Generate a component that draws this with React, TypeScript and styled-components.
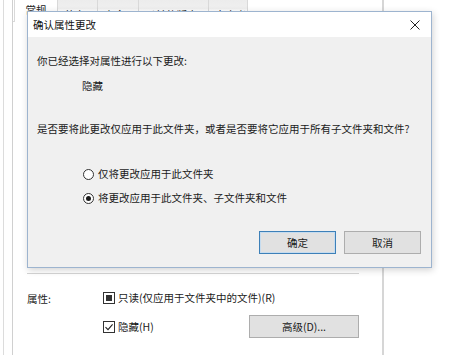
import React from "react";
import styled, { createGlobalStyle } from "styled-components";

const Global = createGlobalStyle`
  html, body { margin: 0; padding: 0; background: #ffffff; }
  body {
    font-family: "Noto Sans CJK SC", "Noto Sans", "Liberation Sans", sans-serif;
    font-size: 10.5px;
    color: #1a1a1a;
  }
`;

const Page = styled.div`
  position: relative;
  width: 449px;
  height: 355px;
  overflow: hidden;
  background: #ffffff;
`;

const OuterFrame = styled.div`
  margin-left: 3px;
  width: 381px;
  height: 355px;
  border-left: 1px solid #dcdcdc;
  padding-left: 8px;
  box-sizing: border-box;
`;

const Window = styled.div`
  height: 100%;
  border-left: 1px solid #d0d0d0;
  border-right: 2px solid #d6d6d6;
  display: flex;
  flex-direction: column;
  background: #ffffff;
`;

const TabStrip = styled.div`
  display: flex;
  height: 22px;
  border-bottom: 1px solid #d9d9d9;
  box-sizing: border-box;
  padding-left: 1px;
`;

const Tab = styled.div<{ $active?: boolean; $w: number }>`
  width: ${(p) => p.$w}px;
  height: ${(p) => (p.$active ? 22 : 21)}px;
  box-sizing: border-box;
  border: 1px solid #d9d9d9;
  border-top: none;
  border-left: ${(p) => (p.$active ? "1px solid #d9d9d9" : "none")};
  border-bottom: ${(p) => (p.$active ? "none" : "1px solid #d9d9d9")};
  background: ${(p) => (p.$active ? "#ffffff" : "linear-gradient(#ececec, #f0f0f0 45%, #ffffff 50%)")};
  display: flex;
  align-items: flex-start;
  justify-content: ${(p) => (p.$active ? "center" : "flex-start")};
  padding-left: ${(p) => (p.$active ? 0 : 6)}px;
  padding-top: ${(p) => (p.$active ? 3 : 8)}px;
  overflow: hidden;
  font-size: 10.5px;
  line-height: 14px;
  color: #222;
`;

const Panel = styled.div`
  flex: 1;
  display: flex;
  flex-direction: column;
  padding: 0 23px 0 14px;
`;

const CoveredArea = styled.div`
  height: 251px;
`;

const Separator = styled.div`
  height: 0;
  border-top: 1px solid #d4d4d4;
  border-bottom: 1px solid #ffffff;
`;

const AttrGrid = styled.div`
  display: grid;
  grid-template-columns: 76px 1fr;
  margin-top: 16px;
`;

const AttrLabel = styled.div`
  line-height: 14px;
  margin-top: 1px;
  color: #222;
`;

const AttrRows = styled.div`
  display: flex;
  flex-direction: column;
  gap: 10px;
`;

const CheckRow = styled.div`
  display: flex;
  align-items: center;
  justify-content: space-between;
  line-height: 14px;
`;

const CheckLabel = styled.label`
  display: flex;
  align-items: center;
  gap: 3px;
  color: #1a1a1a;
`;

const CheckBox = styled.span`
  width: 12px;
  height: 12px;
  box-sizing: border-box;
  border: 1px solid #333;
  background: #fff;
  display: flex;
  align-items: center;
  justify-content: center;
`;

const Indeterminate = styled.span`
  width: 6px;
  height: 6px;
  background: #333;
`;

const WinButton = styled.button<{ $default?: boolean; $w: number }>`
  width: ${(p) => p.$w}px;
  height: 23px;
  box-sizing: border-box;
  border: 1px solid ${(p) => (p.$default ? "#3d80b8" : "#adadad")};
  box-shadow: ${(p) => (p.$default ? "inset 0 0 0 1px #c6dcef" : "none")};
  background: #e1e1e1;
  font-family: inherit;
  font-size: 10.5px;
  color: #1a1a1a;
  padding: 0;
  line-height: 14px;
`;

const Dialog = styled.div`
  position: absolute;
  left: 27px;
  top: 11px;
  width: 405px;
  height: 257px;
  box-sizing: border-box;
  border: 1px solid #9db4cf;
  box-shadow: 1px 2px 7px rgba(0, 0, 0, 0.18);
  background: #f0f0f0;
  display: flex;
  flex-direction: column;
`;

const TitleBar = styled.div`
  height: 25px;
  background: #ffffff;
  display: flex;
  align-items: center;
  justify-content: space-between;
  padding: 0 11px 0 5px;
`;

const Title = styled.div`
  line-height: 14px;
  color: #111;
`;

const CloseIcon = styled.svg`
  width: 10px;
  height: 10px;
  display: block;
`;

const Body = styled.div`
  flex: 1;
  display: flex;
  flex-direction: column;
  padding: 0 10px 13px 9px;
`;

const Line = styled.div<{ $top: number; $indent?: number }>`
  line-height: 14px;
  margin-top: ${(p) => p.$top}px;
  padding-left: ${(p) => p.$indent ?? 0}px;
  white-space: nowrap;
  color: #1a1a1a;
`;

const RadioGroup = styled.div`
  display: flex;
  flex-direction: column;
  gap: 10px;
  margin-top: 31px;
  padding-left: 46px;
`;

const RadioRow = styled.label`
  display: flex;
  align-items: center;
  gap: 4px;
  line-height: 14px;
`;

const RadioCircle = styled.span<{ $on?: boolean }>`
  width: 11px;
  height: 11px;
  box-sizing: border-box;
  border-radius: 50%;
  border: 1px solid #333;
  background: #fff;
  display: flex;
  align-items: center;
  justify-content: center;
  &::after {
    content: "";
    display: ${(p) => (p.$on ? "block" : "none")};
    width: 5px;
    height: 5px;
    border-radius: 50%;
    background: #1a1a1a;
  }
`;

const ButtonRow = styled.div`
  margin-top: auto;
  display: flex;
  justify-content: flex-end;
  gap: 8px;
`;

const tabs = [
  { label: "常规", w: 44, active: true },
  { label: "共享", w: 40 },
  { label: "安全", w: 41 },
  { label: "以前的版本", w: 70 },
  { label: "自定义", w: 39 },
];

export default function App() {
  return (
    <>
      <Global />
      <Page>
        <OuterFrame>
          <Window>
            <TabStrip>
              {tabs.map((t) => (
                <Tab key={t.label} $w={t.w} $active={t.active}>
                  {t.label}
                </Tab>
              ))}
            </TabStrip>
            <Panel>
              <CoveredArea />
              <Separator />
              <AttrGrid>
                <AttrLabel>属性:</AttrLabel>
                <AttrRows>
                  <CheckRow>
                    <CheckLabel>
                      <CheckBox>
                        <Indeterminate />
                      </CheckBox>
                      只读(仅应用于文件夹中的文件)(R)
                    </CheckLabel>
                  </CheckRow>
                  <CheckRow>
                    <CheckLabel>
                      <CheckBox>
                        <svg width="10" height="10" viewBox="0 0 10 10">
                          <path d="M1.5 5.2 L4 7.6 L8.6 2.4" fill="none" stroke="#222" strokeWidth="1.1" />
                        </svg>
                      </CheckBox>
                      隐藏(H)
                    </CheckLabel>
                    <WinButton $w={110}>高级(D)...</WinButton>
                  </CheckRow>
                </AttrRows>
              </AttrGrid>
            </Panel>
          </Window>
        </OuterFrame>

        <Dialog>
          <TitleBar>
            <Title>确认属性更改</Title>
            <CloseIcon viewBox="0 0 10 10">
              <path d="M0.5 0.5 L9.5 9.5 M9.5 0.5 L0.5 9.5" stroke="#222" strokeWidth="1" fill="none" />
            </CloseIcon>
          </TitleBar>
          <Body>
            <Line $top={17}>你已经选择对属性进行以下更改:</Line>
            <Line $top={11} $indent={45}>隐藏</Line>
            <Line $top={29}>是否要将此更改仅应用于此文件夹，或者是否要将它应用于所有子文件夹和文件?</Line>
            <RadioGroup>
              <RadioRow>
                <RadioCircle />
                仅将更改应用于此文件夹
              </RadioRow>
              <RadioRow>
                <RadioCircle $on />
                将更改应用于此文件夹、子文件夹和文件
              </RadioRow>
            </RadioGroup>
            <ButtonRow>
              <WinButton $default $w={77}>确定</WinButton>
              <WinButton $w={77}>取消</WinButton>
            </ButtonRow>
          </Body>
        </Dialog>
      </Page>
    </>
  );
}
